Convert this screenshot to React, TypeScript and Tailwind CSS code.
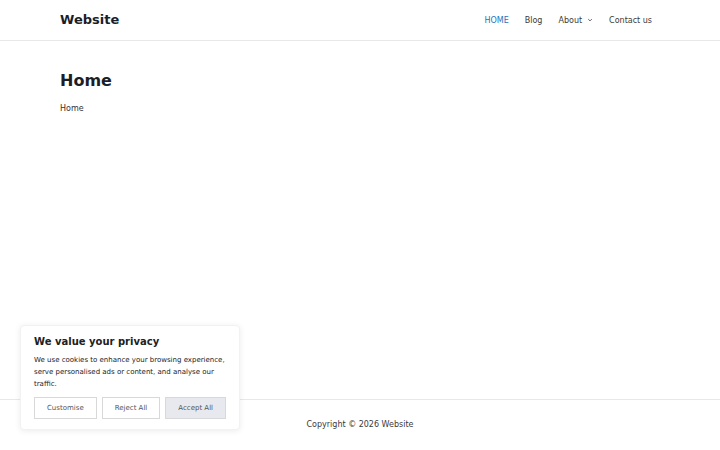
import React from 'react';

const navItems = ['HOME', 'Blog', 'About', 'Contact us'];

const App: React.FC = () => {
    return (
        <div className="relative flex flex-col w-[720px] h-[450px] bg-white text-[#222222] overflow-hidden font-['DejaVu_Sans',sans-serif]">
            {/* Header */}
            <header className="h-[41px] shrink-0 border-b border-[#e8e8e8] flex items-center justify-between pl-[60px] pr-[68px]">
                <span className="-mt-[2px] text-[13px] font-bold text-[#1b1e27] leading-none">Website</span>
                <nav className="mt-[1px] flex items-center gap-[16px] text-[8px] text-[#3a3a3a]">
                    {navItems.map(item => (
                        <span key={item} className={item === 'HOME' ? 'text-[#1e73be]' : ''}>
                            {item}
                            {item === 'About' && (
                                <svg className="inline-block ml-[5px] w-[6px] h-[6px] align-middle" viewBox="0 0 10 10" fill="none" stroke="#555" strokeWidth="1.5">
                                    <path d="M2 3.5 L5 6.5 L8 3.5" />
                                </svg>
                            )}
                        </span>
                    ))}
                </nav>
            </header>

            {/* Content */}
            <main className="flex-1 px-[60px] pt-[30px]">
                <h1 className="text-[16px] font-bold text-[#1b1e27] leading-[20px]">Home</h1>
                <p className="mt-[12px] text-[8px] text-[#333333]">Home</p>
            </main>

            {/* Footer */}
            <footer className="h-[51px] shrink-0 border-t border-[#e8e8e8] flex items-center justify-center">
                <span className="text-[8px] text-[#3a3a3a]">Copyright © 2026 Website</span>
            </footer>

            {/* Cookie notice */}
            <div className="absolute left-[20px] bottom-[20px] w-[220px] bg-white rounded-[4px] border border-[#f2f2f2] shadow-[0_1px_6px_rgba(0,0,0,0.08)] px-[13px] pt-[10px] pb-[10px]">
                <p className="text-[10px] font-bold text-[#212121] leading-[12px]">We value your privacy</p>
                <p className="mt-[6px] text-[7px] leading-[12px] text-[#212121]">
                    We use cookies to enhance your browsing experience, serve personalised ads or content, and analyse our traffic.
                </p>
                <div className="mt-[7px] flex gap-[5px] text-[7px] text-[#555]">
                    <button className="w-[63px] h-[22px] border border-[#d8d8d8] bg-white">Customise</button>
                    <button className="w-[59px] h-[22px] border border-[#d8d8d8] bg-white">Reject All</button>
                    <button className="w-[61px] h-[22px] border border-[#d8d8d8] bg-[#e7e9ee]">Accept All</button>
                </div>
            </div>
        </div>
    );
};

export default App;
